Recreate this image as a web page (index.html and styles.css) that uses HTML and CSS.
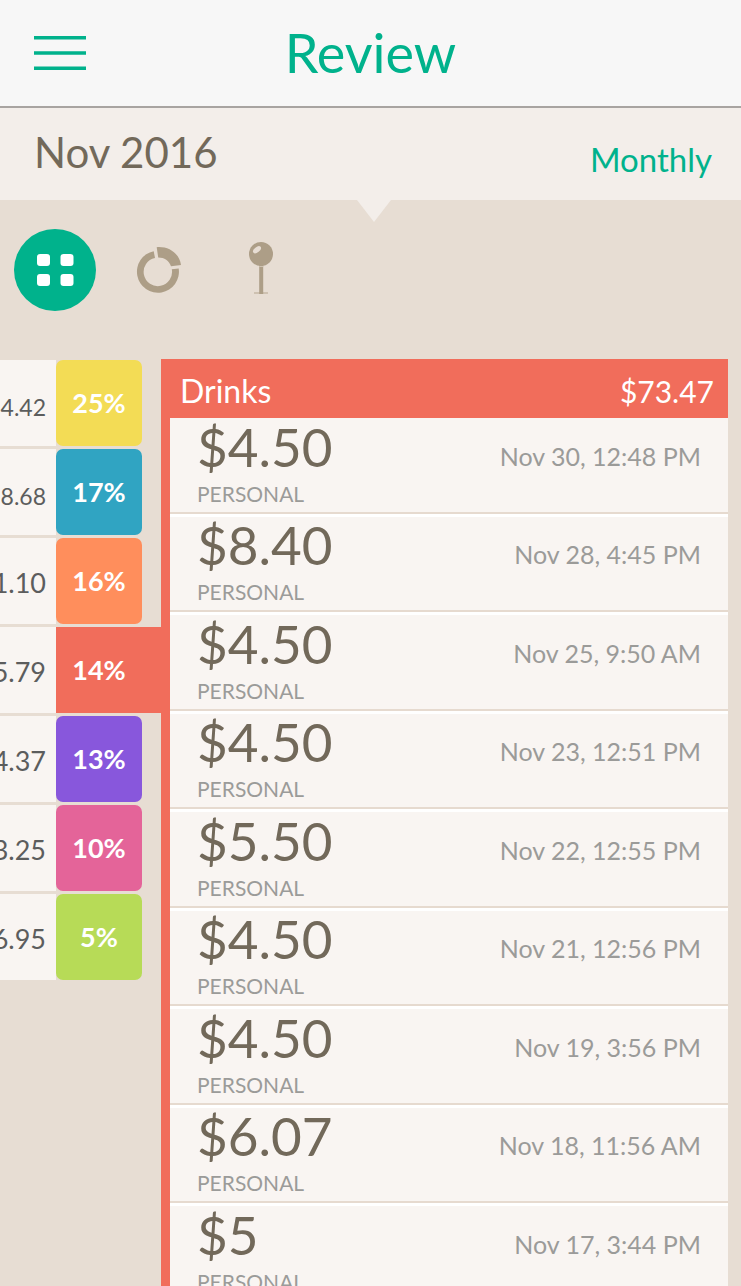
FILE: index.html
```html
<!DOCTYPE html>
<html lang="en">
<head>
<meta charset="utf-8">
<meta name="viewport" content="width=device-width, initial-scale=1">
<title>Review</title>
<link rel="stylesheet" href="styles.css">
</head>
<body>
<div class="app">
  <header class="topbar">
    <button class="menu" type="button" aria-label="Menu">
      <svg width="52" height="34" viewBox="0 0 52 34"><path d="M0 1.8H52M0 17H52M0 32.200H52" stroke="#00b28c" stroke-width="3.400"/></svg>
    </button>
    <h1 class="title">Review</h1>
  </header>
  <div class="period">
    <h2 class="month">Nov 2016</h2>
    <button class="range" type="button">Monthly</button>
    <svg class="notch" width="34" height="22" viewBox="0 0 34 22"><path d="M0 0H34L17 22Z" fill="#f3eeea"/></svg>
  </div>
  <nav class="views">
    <button class="view view-active" type="button" aria-label="Categories">
      <svg width="38" height="34" viewBox="0 0 38 34" fill="#fff"><rect x="1" y="1" width="13" height="12" rx="3"/><rect x="24.500" y="1" width="13" height="12" rx="3"/><rect x="1" y="21" width="13" height="12" rx="3"/><rect x="24.500" y="21" width="13" height="12" rx="3"/></svg>
    </button>
    <button class="view" type="button" aria-label="Chart">
      <svg width="46" height="46" viewBox="0 0 46 46" fill="#ad9e87"><path d="M18.700 4.200A21 21 0 1 0 43.700 21.500L36.800 22.200A14.200 14.200 0 1 1 20 11Z"/><path d="M21.700 .2C34 -.8 44.500 6.500 46 18L36 19.200C34 13.500 29.500 10.500 23.200 10.400Z"/></svg>
    </button>
    <button class="view" type="button" aria-label="Places">
      <svg width="24" height="56" viewBox="0 0 24 56"><path d="M10.200 22H14.200V52H10.200Z" fill="#ad9e87"/><path d="M5 51H19" stroke="#ad9e87" stroke-opacity=".6" stroke-width="1.500"/><circle cx="12" cy="12" r="12" fill="#ad9e87"/><path d="M10.200 24.500H14.200" stroke="#cfc3b2"/><ellipse cx="8" cy="7.700" rx="4.600" ry="2.600" transform="rotate(-38 8 7.700)" fill="#e7ddd3"/></svg>
    </button>
  </nav>
  <main class="content">
    <ul class="categories">
      <li class="category"><span class="sum sum-small">4.42</span><span class="share yellow">25%</span></li>
      <li class="category"><span class="sum sum-small">8.68</span><span class="share blue">17%</span></li>
      <li class="category"><span class="sum">1.10</span><span class="share orange">16%</span></li>
      <li class="category"><span class="sum">5.79</span><span class="share selected">14%</span></li>
      <li class="category"><span class="sum">4.37</span><span class="share purple">13%</span></li>
      <li class="category"><span class="sum">3.25</span><span class="share pink">10%</span></li>
      <li class="category"><span class="sum">6.95</span><span class="share green">5%</span></li>
    </ul>
    <section class="panel">
      <header class="panel-head"><h3 class="panel-title">Drinks</h3><span class="total">$73.47</span></header>
      <ul class="entries">
        <li class="entry"><div><div class="amount">$4.50</div><div class="tag">PERSONAL</div></div><time class="date">Nov 30, 12:48 PM</time></li>
        <li class="entry"><div><div class="amount">$8.40</div><div class="tag">PERSONAL</div></div><time class="date">Nov 28, 4:45 PM</time></li>
        <li class="entry"><div><div class="amount">$4.50</div><div class="tag">PERSONAL</div></div><time class="date">Nov 25, 9:50 AM</time></li>
        <li class="entry"><div><div class="amount">$4.50</div><div class="tag">PERSONAL</div></div><time class="date">Nov 23, 12:51 PM</time></li>
        <li class="entry"><div><div class="amount">$5.50</div><div class="tag">PERSONAL</div></div><time class="date">Nov 22, 12:55 PM</time></li>
        <li class="entry"><div><div class="amount">$4.50</div><div class="tag">PERSONAL</div></div><time class="date">Nov 21, 12:56 PM</time></li>
        <li class="entry"><div><div class="amount">$4.50</div><div class="tag">PERSONAL</div></div><time class="date">Nov 19, 3:56 PM</time></li>
        <li class="entry"><div><div class="amount">$6.07</div><div class="tag">PERSONAL</div></div><time class="date">Nov 18, 11:56 AM</time></li>
        <li class="entry"><div><div class="amount">$5</div><div class="tag">PERSONAL</div></div><time class="date">Nov 17, 3:44 PM</time></li>
      </ul>
    </section>
  </main>
</div>
</body>
</html>
```
FILE: styles.css
```css
* { box-sizing: border-box; }
body, h1, h2, h3, ul { margin: 0; padding: 0; }
h1, h2, h3 { font-weight: 400; }
ul { list-style: none; }
svg { display: block; }
button { border: 0; padding: 0; background: none; font: inherit; color: inherit; cursor: pointer; }

body { font-family: Lato, "Noto Sans", sans-serif; background: #e7ddd3; }
.app { height: 100vh; overflow: hidden; display: flex; flex-direction: column; }

.topbar {
  flex: none;
  display: grid;
  grid-template-columns: 1fr auto 1fr;
  align-items: center;
  height: 108px;
  padding: 0 34px;
  background: #f7f7f7;
  border-bottom: 2px solid #a8a4a1;
  color: #00b28c;
}
.menu { justify-self: start; }
.title { font-size: 54px; line-height: 64px; }

.period {
  flex: none;
  position: relative;
  display: flex;
  justify-content: space-between;
  align-items: center;
  height: 92px;
  padding: 0 29px 0 34px;
  background: #f3eeea;
}
.month { font-size: 42px; line-height: 88px; padding-bottom: 4px; color: #72695a; }
.range { padding-top: 10px; font-size: 33px; color: #00b28c; }
.notch { position: absolute; top: 100%; left: 50%; margin-left: -14px; }

.views { flex: none; display: flex; align-items: center; gap: 21px; padding: 29px 14px 48px; }
.view { display: flex; align-items: center; justify-content: center; width: 82px; height: 82px; border-radius: 50%; }
.view-active { background: #00b28c; }

.content { flex: 1; min-height: 0; display: grid; grid-template-columns: 161px 1fr; padding-right: 13px; }
.categories { display: flex; flex-direction: column; gap: 3px; padding-top: 1px; }
.category { display: flex; height: 86px; }
.sum {
  display: flex;
  justify-content: flex-end;
  width: 56px;
  padding-right: 10px;
  overflow: hidden;
  background: #f9f5f2;
  color: #5c5d5d;
  font-size: 27px;
  line-height: 90px;
}
.sum-small { font-size: 23px; line-height: 94px; }
.share {
  width: 86px;
  border-radius: 7px;
  color: #fff;
  font-size: 27px;
  font-weight: 700;
  line-height: 86px;
  text-align: center;
}
.yellow { background: #f3dc55; }
.blue { background: #30a4c2; }
.orange { background: #ff8e5c; }
.selected { width: 105px; padding-right: 19px; border-radius: 0; background: #f16d5b; }
.purple { background: #8857dc; }
.pink { background: #e46499; }
.green { background: #b7db57; }

.panel { min-height: 0; padding-left: 9px; background: #f16d5b; }
.panel-head {
  display: flex;
  justify-content: space-between;
  align-items: center;
  height: 59px;
  padding: 4px 14px 0 10px;
  color: #fff;
}
.panel-title { font-size: 32px; }
.total { font-size: 30px; }
.entry {
  display: flex;
  justify-content: space-between;
  align-items: flex-end;
  height: 98px;
  padding: 0 27px 5px;
  background: #f9f5f2;
  border-top: 3px solid #fff;
  border-bottom: 2px solid #e6dacf;
}
.entry:nth-child(odd) { height: 99px; }
.entry:first-child { height: 96px; border-top: 0; }
.amount { padding-bottom: 5px; font-size: 53px; line-height: 58px; color: #72695a; }
.tag { font-size: 21px; line-height: 26px; color: #9b9b99; }
.date { padding-bottom: 34px; font-size: 25px; line-height: 34px; color: #9b9b99; }
```
